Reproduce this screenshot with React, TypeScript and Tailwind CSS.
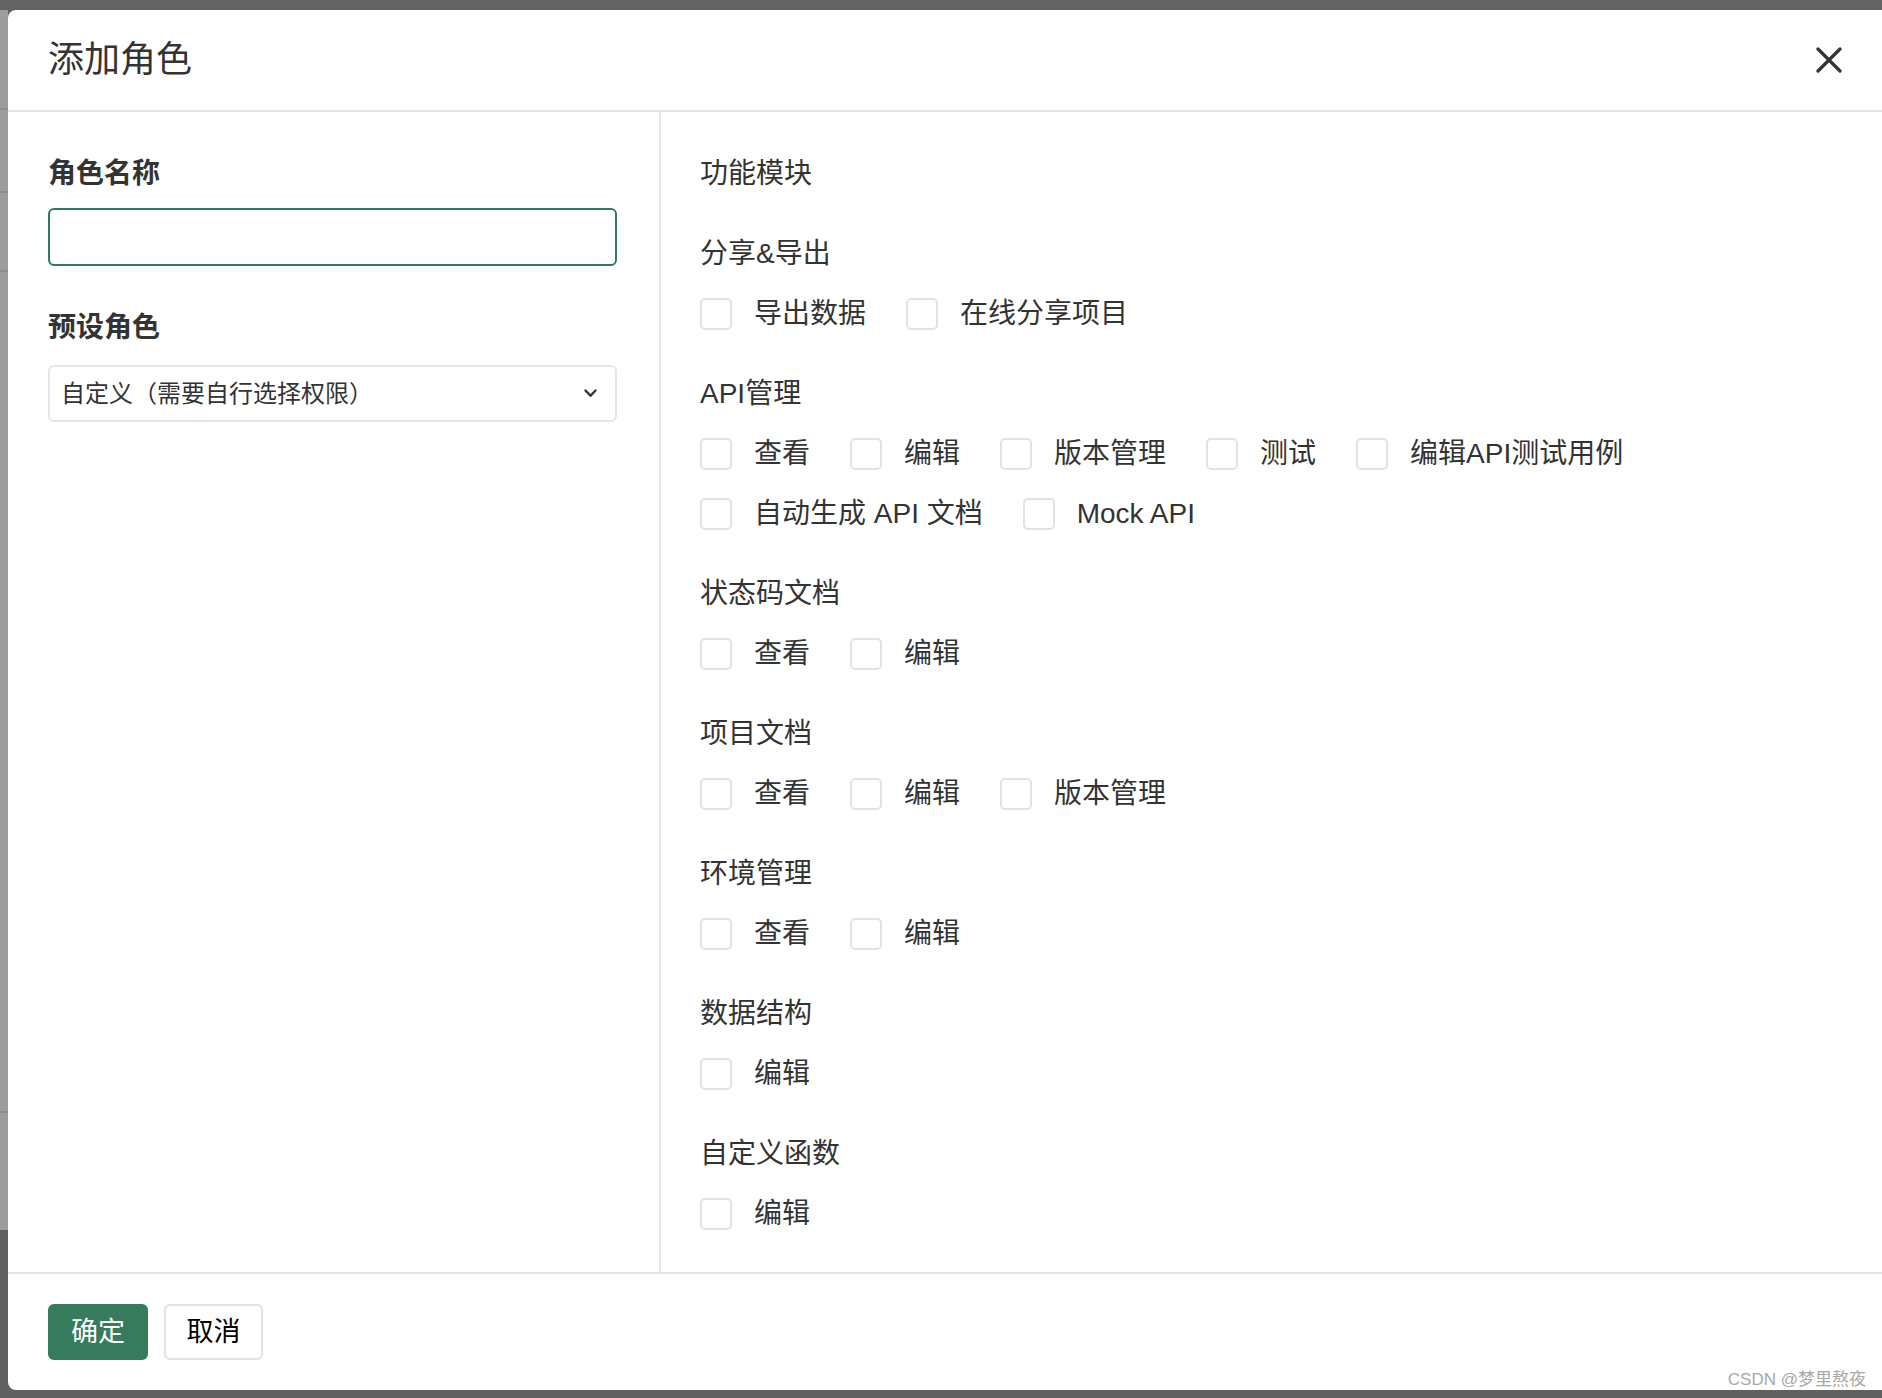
import React from "react";

type Section = { title: string; rows: string[][] };

const sections: Section[] = [
  { title: "分享&导出", rows: [["导出数据", "在线分享项目"]] },
  {
    title: "API管理",
    rows: [
      ["查看", "编辑", "版本管理", "测试", "编辑API测试用例"],
      ["自动生成 API 文档", "Mock API"],
    ],
  },
  { title: "状态码文档", rows: [["查看", "编辑"]] },
  { title: "项目文档", rows: [["查看", "编辑", "版本管理"]] },
  { title: "环境管理", rows: [["查看", "编辑"]] },
  { title: "数据结构", rows: [["编辑"]] },
  { title: "自定义函数", rows: [["编辑"]] },
];

const CheckItem = ({ label }: { label: string }) => (
  <label className="flex items-center gap-[22px] h-[40px]">
    <span className="w-[32px] h-[32px] rounded-[5px] border-2 border-[#e2e2e2] bg-white" />
    <span className="text-[28px] leading-[40px] text-[#333]">{label}</span>
  </label>
);

const App = () => {
  return (
    <div className="relative w-[1882px] h-[1398px] overflow-hidden bg-[#606060] font-['Liberation_Sans','Noto_Sans_CJK_SC',sans-serif]">
      <div className="h-[10px] bg-[#636363]" />
      <div className="flex">
        {/* page behind the overlay */}
        <div className="w-[8px] flex flex-col">
          <div className="h-[100px] bg-[#9d9d9d] border-b-2 border-[#8e8e8e]" />
          <div className="h-[83px] bg-[#9d9d9d] border-b-2 border-[#8e8e8e]" />
          <div className="h-[79px] bg-[#9d9d9d] border-b-2 border-[#8e8e8e]" />
          <div className="h-[841px] bg-[#9d9d9d] border-b-2 border-[#8e8e8e]" />
          <div className="h-[117px] bg-[#9d9d9d]" />
          <div className="h-[160px] bg-[#606060]" />
        </div>

        <div className="w-[1874px] h-[1380px] bg-white rounded-l-[8px] flex flex-col">
          <div className="h-[102px] flex items-center justify-between px-[40px] border-b-2 border-[#e6e6e6]">
            <span className="text-[36px] leading-[44px] text-[#333]">添加角色</span>
            <svg width="26" height="26" viewBox="0 0 26 26" className="text-[#333]">
              <path d="M2 2 L24 24 M24 2 L2 24" stroke="currentColor" strokeWidth="3.2" strokeLinecap="round" />
            </svg>
          </div>

          <div className="flex">
            <div className="w-[653px] border-r-2 border-[#e6e6e6] pt-[42px] pl-[40px] pr-[42px]">
              <div className="h-[40px] leading-[40px] text-[28px] font-bold text-[#333] mb-[14px]">角色名称</div>
              <input className="block w-full h-[58px] rounded-[6px] border-2 border-[#2f7a5a] outline-none px-[12px] text-[22px]" />
              <div className="h-[40px] leading-[40px] text-[28px] font-bold text-[#333] mt-[42px] mb-[17px]">预设角色</div>
              <div className="h-[57px] rounded-[6px] border-2 border-[#e6e6e6] flex items-center justify-between pl-[11px] pr-[18px]">
                <span className="text-[24px] text-[#333]">自定义（需要自行选择权限）</span>
                <svg width="13" height="9" viewBox="0 0 13 9">
                  <path d="M1.5 1.5 L6.5 6.8 L11.5 1.5" fill="none" stroke="#333" strokeWidth="2.4" strokeLinecap="round" strokeLinejoin="round" />
                </svg>
              </div>
            </div>

            <div className="flex-1 pt-[42px] pb-[38px] pl-[39px]">
              <div className="h-[40px] leading-[40px] text-[28px] text-[#333] mb-[40px]">功能模块</div>
              <div className="flex flex-col gap-[40px]">
                {sections.map((s) => (
                  <div key={s.title} className="flex flex-col">
                    <div className="h-[40px] leading-[40px] text-[28px] text-[#333] mb-[20px]">{s.title}</div>
                    <div className="flex flex-col gap-[20px]">
                      {s.rows.map((row, i) => (
                        <div key={i} className="flex items-center gap-[40px]">
                          {row.map((label) => (
                            <CheckItem key={label} label={label} />
                          ))}
                        </div>
                      ))}
                    </div>
                  </div>
                ))}
              </div>
            </div>
          </div>

          <div className="h-[118px] border-t-2 border-[#e6e6e6] flex items-center gap-[16px] px-[40px]">
            <button className="w-[100px] h-[56px] rounded-[6px] bg-[#367b5c] text-white text-[27px]">确定</button>
            <button className="w-[99px] h-[56px] rounded-[6px] border-2 border-[#e2e2e2] bg-white text-black text-[27px]">取消</button>
          </div>
        </div>
      </div>

      <span className="absolute right-[16px] bottom-[8px] text-[17px] leading-[20px] text-[#a8a8a8]">CSDN @梦里熬夜</span>
    </div>
  );
};

export default App;
